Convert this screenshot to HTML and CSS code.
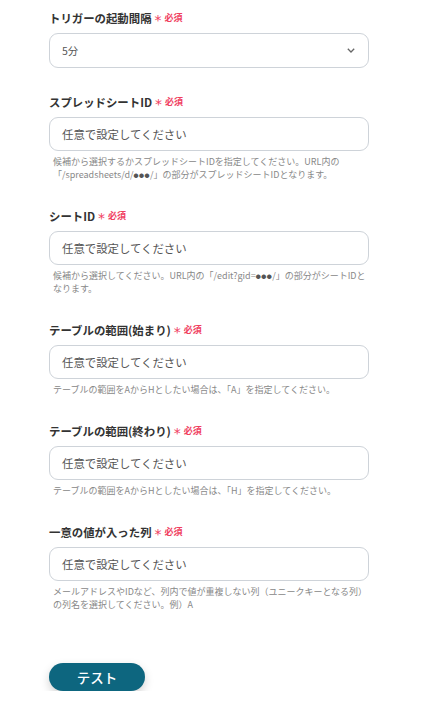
FILE: index.html
```html
<!DOCTYPE html>
<html lang="ja">
<head>
<meta charset="utf-8">
<link rel="stylesheet" href="styles.css">
</head>
<body>
<div class="form">
  <div class="field">
    <div class="label">トリガーの起動間隔<span class="ast">*</span><span class="req">必須</span></div>
    <div class="select">
      <span class="value">5分</span>
      <svg class="chev" width="8" height="5" viewBox="0 0 8 5"><path d="M0.8 0.8 L4 4 L7.2 0.8" fill="none" stroke="#666" stroke-width="1.3"/></svg>
    </div>
  </div>
  <div class="field">
    <div class="label">スプレッドシートID<span class="ast">*</span><span class="req">必須</span></div>
    <div class="input">任意で設定してください</div>
    <div class="help"><span class="line">候補から選択するかスプレッドシートIDを指定してください。URL内の</span><span class="line">「/spreadsheets/d/<span class="dots">●●●</span>/」の部分がスプレッドシートIDとなります。</span></div>
  </div>
  <div class="field">
    <div class="label">シートID<span class="ast">*</span><span class="req">必須</span></div>
    <div class="input">任意で設定してください</div>
    <div class="help"><span class="line">候補から選択してください。URL内の「/edit?gid=<span class="dots">●●●</span>/」の部分がシートIDと</span><span class="line">なります。</span></div>
  </div>
  <div class="field">
    <div class="label">テーブルの範囲(始まり)<span class="ast">*</span><span class="req">必須</span></div>
    <div class="input">任意で設定してください</div>
    <div class="help"><span class="line">テーブルの範囲をAからHとしたい場合は、「A」を指定してください。</span></div>
  </div>
  <div class="field">
    <div class="label">テーブルの範囲(終わり)<span class="ast">*</span><span class="req">必須</span></div>
    <div class="input">任意で設定してください</div>
    <div class="help"><span class="line">テーブルの範囲をAからHとしたい場合は、「H」を指定してください。</span></div>
  </div>
  <div class="field">
    <div class="label">一意の値が入った列<span class="ast">*</span><span class="req">必須</span></div>
    <div class="input">任意で設定してください</div>
    <div class="help"><span class="line">メールアドレスやIDなど、列内で値が重複しない列（ユニークキーとなる列）</span><span class="line">の列名を選択してください。例）A</span></div>
  </div>
  <button class="btn">テスト</button>
</div>
</body>
</html>
```
FILE: styles.css
```css
* { box-sizing: border-box; }
body {
  margin: 0;
  background: #fff;
  font-family: "Noto Sans CJK JP", "Noto Sans", sans-serif;
  color: #333;
}
.form {
  padding: 10px 0 0 49px;
  width: 369px;
  display: flex;
  flex-direction: column;
}
.field {
  display: flex;
  flex-direction: column;
  margin-bottom: 27px;
}
.field:first-child { margin-bottom: 26px; }
.label {
  font-size: 11.4px;
  font-weight: 700;
  line-height: 16px;
  color: #333;
  display: flex;
  align-items: center;
  margin-bottom: 7px;
}
.ast {
  color: #f0405f;
  font-family: "DejaVu Sans", sans-serif;
  font-size: 14px;
  font-weight: 400;
  margin-left: 3px;
  line-height: 16px;
  position: relative;
  top: 2px;
}
.req {
  color: #f0405f;
  font-size: 9px;
  font-weight: 700;
  margin-left: 3px;
}
.select, .input {
  height: 34px;
  border: 1px solid #ced3d9;
  border-radius: 9px;
  display: flex;
  align-items: center;
  padding: 0 12px;
}
.select {
  height: 35px;
  justify-content: space-between;
  font-size: 10.5px;
  color: #555;
  padding-right: 13px;
}
.input {
  font-size: 11.4px;
  color: #555;
}
.help {
  margin-top: 4px;
  padding-left: 4px;
  font-size: 9px;
  line-height: 13px;
  color: #888;
  display: flex;
  flex-direction: column;
}
.line { white-space: nowrap; }
.dots {
  font-size: 5px;
  color: #555;
  letter-spacing: 0.5px;
  vertical-align: 1px;
}
.btn {
  margin-top: 25px;
  width: 96px;
  height: 28px;
  border: none;
  border-radius: 14px;
  background: #0d667f;
  color: #fff;
  font-family: "Noto Sans CJK JP", "Noto Sans", sans-serif;
  font-size: 13.5px;
  font-weight: 500;
  box-shadow: 0 4px 10px rgba(0,0,0,0.18);
  padding: 0;
}
```
